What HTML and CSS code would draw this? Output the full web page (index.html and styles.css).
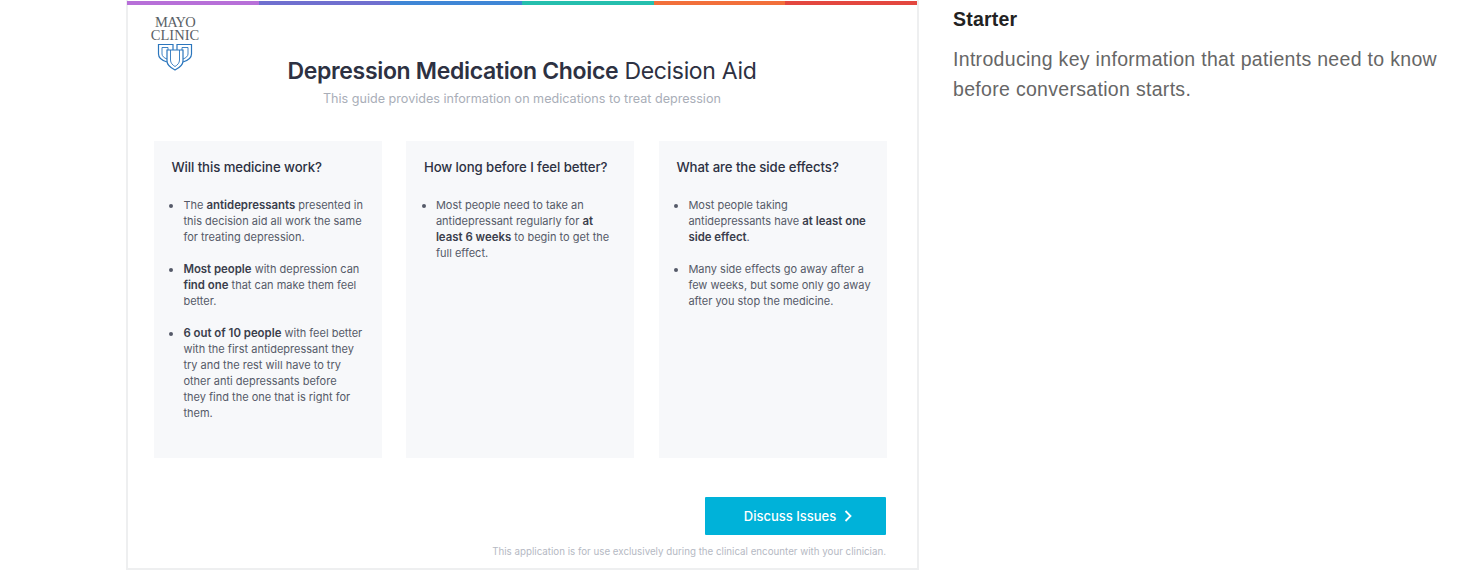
FILE: index.html
```html
<!DOCTYPE html>
<html lang="en">

<head>
  <meta charset="UTF-8">
  <title>Depression Medication Choice Decision Aid</title>
  <link rel="stylesheet" href="styles.css">
</head>

<body>
  <div class="page">
    <main class="frame">
      <div class="rainbow">
        <span class="purple"></span>
        <span class="indigo"></span>
        <span class="blue"></span>
        <span class="teal"></span>
        <span class="orange"></span>
        <span class="red"></span>
      </div>

      <div class="logo">
        <div class="logo-text"><span class="logo-top">MAYO</span><br>CLINIC</div>
        <svg class="logo-mark" width="36" height="28" viewBox="0 0 36 28" fill="none" stroke="#2b76bd" stroke-width="1.2">
          <path d="M10 19C5 17.500 1.500 15 1.500 11V1.500H16V7" />
          <path d="M26 19C31 17.500 34.500 15 34.500 11V1.500H20V7" />
          <path d="M5 4.500H11V7M31 4.500H25V7M5 4.500V11C5 13 7 15 10 16M31 4.500V11C31 13 29 15 26 16" stroke-width="0.9" />
          <path d="M10 7H26V18C26 22 22 25 18 27C14 25 10 22 10 18Z" fill="#fff" />
          <path d="M13.500 7V17C13.500 20 15.500 22 18 23.500C20.500 22 22.500 20 22.500 17V7" stroke-width="0.9" />
        </svg>
      </div>

      <header class="head">
        <h1><b>Depression Medication Choice</b> Decision Aid</h1>
        <p>This guide provides information on medications to treat depression</p>
      </header>

      <section class="cards">
        <article class="card">
          <h2>Will this medicine work?</h2>
          <ul>
            <li>The <b>antidepressants</b> presented in<br>this decision aid all work the same<br>for treating depression.</li>
            <li><b>Most people</b> with depression can<br><b>find one</b> that can make them feel<br>better.</li>
            <li><b>6 out of 10 people</b> with feel better<br>with the first antidepressant they<br>try and the rest will have to try<br>other anti depressants before<br>they find the one that is right for<br>them.</li>
          </ul>
        </article>
        <article class="card">
          <h2>How long before I feel better?</h2>
          <ul>
            <li>Most people need to take an<br>antidepressant regularly for <b>at</b><br><b>least 6 weeks</b> to begin to get the<br>full effect.</li>
          </ul>
        </article>
        <article class="card">
          <h2>What are the side effects?</h2>
          <ul>
            <li>Most people taking<br>antidepressants have <b>at least one</b><br><b>side effect</b>.</li>
            <li>Many side effects go away after a<br>few weeks, but some only go away<br>after you stop the medicine.</li>
          </ul>
        </article>
      </section>

      <div class="actions">
        <button type="button" class="btn">
          Discuss Issues
          <svg width="8" height="12" viewBox="0 0 8 12" fill="none" stroke="#fff" stroke-width="1.8">
            <path d="M1.500 1L6.500 6L1.500 11" />
          </svg>
        </button>
      </div>
      <p class="note">This application is for use exclusively during the clinical encounter with your clinician.</p>
    </main>

    <aside class="side">
      <h3>Starter</h3>
      <p>Introducing key information that patients need to know before conversation starts.</p>
    </aside>
  </div>
</body>

</html>
```

FILE: styles.css
```css
html, body {
  margin: 0;
  height: 570px;
  overflow: hidden;
  background-color: #fff;
}

.page {
  display: flex;
  align-items: flex-start;
  padding-left: 126px;
  font-family: Inter, "Liberation Sans", sans-serif;
}

.frame {
  position: relative;
  box-sizing: border-box;
  width: 793px;
  height: 570px;
  padding: 0 31px 0 25.900px;
  border: 2px solid #eeeff0;
  border-top: none;
}

.rainbow {
  display: flex;
  height: 4px;
  margin: 1px -31px 0 -26.900px;
}

.rainbow span {
  flex: 1;
}

.purple { background-color: #b76fd8; }
.indigo { background-color: #6f6fcf; }
.blue { background-color: #3f86d6; }
.teal { background-color: #25bfae; }
.orange { background-color: #f26f3a; }
.red { background-color: #e3473f; }

.logo {
  position: absolute;
  left: 22px;
  top: 16px;
  width: 50px;
  text-align: center;
}

.logo-text {
  font-family: "Liberation Serif", serif;
  font-size: 14.500px;
  line-height: 12.500px;
  color: #5a5f66;
}

.logo-top {
  letter-spacing: -0.8px;
}

.logo-mark {
  display: block;
  margin: 2px auto 0;
}

.head {
  text-align: center;
  padding-top: 51px;
  margin-left: 4px;
}

.head h1 {
  margin: 0;
  font-size: 23px;
  line-height: 30px;
  font-weight: 400;
  letter-spacing: -0.33px;
  color: #2d3142;
}

.head h1 b {
  font-weight: 600;
}

.head p {
  margin: 3px 0 0;
  font-size: 12.600px;
  line-height: 20px;
  color: #a9aeb8;
}

.cards {
  display: flex;
  gap: 24.500px;
  margin-top: 32px;
}

.card {
  box-sizing: border-box;
  flex: none;
  width: 228px;
  height: 317px;
  padding: 17px 10px 18px 17.500px;
  background-color: #f7f8fa;
}

.card h2 {
  margin: 0;
  font-size: 13.200px;
  line-height: 18px;
  font-weight: 500;
  letter-spacing: -0.08px;
  color: #2d3142;
}

.card ul {
  margin: 21px 0 0;
  padding: 0 0 0 12px;
}

.card li {
  margin-bottom: 16px;
  font-size: 11px;
  line-height: 16px;
  white-space: nowrap;
  color: #555a68;
}

.card li b {
  font-size: 11.400px;
  font-weight: 600;
  color: #3a3e4c;
}

.actions {
  display: flex;
  justify-content: flex-end;
  margin-top: 39px;
}

.btn {
  display: flex;
  align-items: center;
  justify-content: center;
  gap: 8px;
  width: 181px;
  height: 38px;
  padding: 0 0 0 5px;
  border: none;
  border-radius: 1px;
  background-color: #00b2d9;
  color: #fff;
  font-family: inherit;
  font-size: 13px;
  font-weight: 500;
  cursor: pointer;
}

.note {
  margin: 10px 0 0;
  text-align: right;
  font-size: 9.750px;
  line-height: 14px;
  color: #b5b9c3;
}

.side {
  margin-left: 34px;
  width: 500px;
  font-family: "Liberation Sans", Arial, sans-serif;
}

.side h3 {
  margin: 8px 0 0;
  font-size: 19.500px;
  line-height: 22px;
  font-weight: 700;
  letter-spacing: 0.2px;
  color: #222;
}

.side p {
  margin: 14px 0 0;
  font-size: 19.500px;
  line-height: 30px;
  letter-spacing: 0.31px;
  color: #666;
}
```
